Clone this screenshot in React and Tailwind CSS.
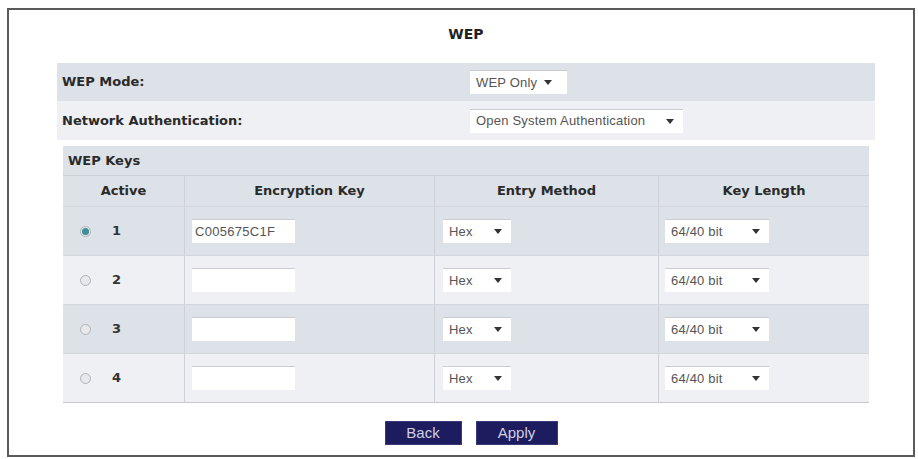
import { useState } from 'react'

const Arrow = () => (
  <svg width="8" height="5" viewBox="0 0 8 5" className="shrink-0">
    <path d="M0 0 L8 0 L4 5 Z" fill="#333" />
  </svg>
)

const FakeSelect = ({ value, width, pr = 9 }) => (
  <div
    className="flex h-[24px] items-center justify-between border-t border-[#c9ccd1] bg-white pl-[6px] text-[13px] tracking-[0.2px] text-[#555] font-['Liberation_Sans',Arial,sans-serif]"
    style={{ width, paddingRight: pr }}
  >
    <span className="whitespace-nowrap">{value}</span>
    <Arrow />
  </div>
)

const Radio = ({ checked, onClick }) => (
  <button
    type="button"
    onClick={onClick}
    className="flex h-[11px] w-[11px] items-center justify-center rounded-full border border-[#b0b4ba] bg-[#e6e8eb]"
  >
    {checked && <span className="h-[7px] w-[7px] rounded-full bg-[#3f8f95]" />}
  </button>
)

const keys = [
  { id: 1, value: 'C005675C1F' },
  { id: 2, value: '' },
  { id: 3, value: '' },
  { id: 4, value: '' }
]

const App = () => {
  const [active, setActive] = useState(1)

  return (
    <div className="h-[459px] w-[918px] bg-white pl-[7px] pt-[8px] font-['DejaVu_Sans',Verdana,sans-serif]">
      <div className="flex h-[449px] w-[908px] flex-col border-2 border-[#5a5a5a]">
        <div className="ml-[48px] w-[818px]">
          <h1 className="pt-[14px] pb-[19px] text-center text-[14px] leading-[20px] font-bold text-[#222]">WEP</h1>

          <div className="grid h-[38px] grid-cols-[413px_1fr] items-center bg-[#dde1e8]">
            <span className="pl-[5px] text-[13px] font-bold text-[#2a2a2a]">WEP Mode:</span>
            <FakeSelect value="WEP Only" width={97} pr={15} />
          </div>
          <div className="grid h-[39px] grid-cols-[413px_1fr] items-center bg-[#eef0f3]">
            <span className="pl-[5px] text-[13px] font-bold text-[#2a2a2a]">Network Authentication:</span>
            <FakeSelect value="Open System Authentication" width={213} />
          </div>

          <div className="mt-[6px] ml-[6px] w-[806px] border-b border-[#c6cad0]">
            <div className="flex h-[30px] items-center border-b border-[#cdd1d7] bg-[#dde1e8] pl-[5px] text-[13px] font-bold text-[#2a2a2a]">
              WEP Keys
            </div>
            <div className="grid h-[30px] grid-cols-[122px_250px_224px_1fr] bg-[#dde1e8] text-[13px] font-bold text-[#2a2a2a]">
              <div className="flex items-center justify-center border-r border-[#cdd1d7]">Active</div>
              <div className="flex items-center justify-center border-r border-[#cdd1d7]">Encryption Key</div>
              <div className="flex items-center justify-center border-r border-[#cdd1d7]">Entry Method</div>
              <div className="flex items-center justify-center">Key Length</div>
            </div>
            {keys.map((k, i) => (
              <div
                key={k.id}
                className={`grid h-[49px] grid-cols-[122px_250px_224px_1fr] border-t border-[#d3d6db] ${i % 2 === 0 ? 'bg-[#dde1e8]' : 'bg-[#eef0f3]'}`}
              >
                <div className="flex items-center border-r border-[#cdd1d7] pl-[17px]">
                  <Radio checked={active === k.id} onClick={() => setActive(k.id)} />
                  <span className="ml-[21px] text-[13px] font-bold text-[#333]">{k.id}</span>
                </div>
                <div className="flex items-center border-r border-[#cdd1d7] pl-[7px]">
                  <input
                    type="text"
                    defaultValue={k.value}
                    className="h-[24px] w-[103px] border-t border-[#c9ccd1] bg-white px-[3px] text-[13px] tracking-[0.3px] text-[#555] outline-none font-['Liberation_Sans',Arial,sans-serif]"
                  />
                </div>
                <div className="flex items-center border-r border-[#cdd1d7] pl-[8px]">
                  <FakeSelect value="Hex" width={68} />
                </div>
                <div className="flex items-center pl-[6px]">
                  <FakeSelect value="64/40 bit" width={104} />
                </div>
              </div>
            ))}
          </div>

          <div className="mt-[18px] flex justify-center gap-[14px] pl-[10px]">
            <button
              type="button"
              className="h-[24px] w-[77px] border border-[#3a3a7a] bg-[#1c1c5e] text-[15px] text-[#d0d0e2] font-['Liberation_Sans',Arial,sans-serif]"
            >
              Back
            </button>
            <button
              type="button"
              className="h-[24px] w-[82px] border border-[#3a3a7a] bg-[#1c1c5e] text-[15px] text-[#d0d0e2] font-['Liberation_Sans',Arial,sans-serif]"
            >
              Apply
            </button>
          </div>
        </div>
      </div>
    </div>
  )
}

export default App
